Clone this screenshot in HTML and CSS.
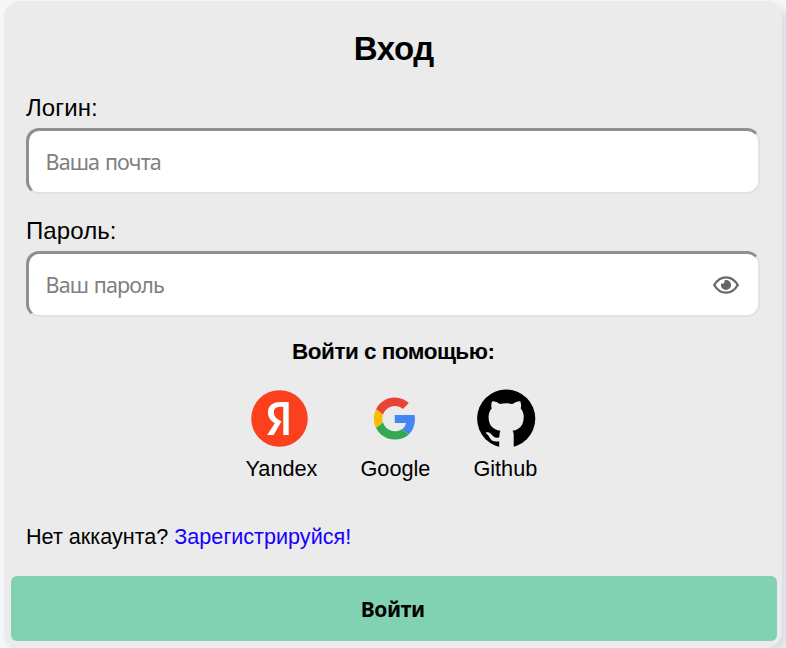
FILE: index.html
```
<!DOCTYPE html>
<html lang="ru">
<head>
<meta charset="utf-8">
<title>Вход</title>
<link rel="stylesheet" href="styles.css">
</head>
<body>
<form class="card">
  <h1 class="title">Вход</h1>
  <div class="field">
    <label class="label" for="login">Логин:</label>
    <div class="control"><input class="input" id="login" type="text" placeholder="Ваша почта"></div>
  </div>
  <div class="field">
    <label class="label" for="password">Пароль:</label>
    <div class="control">
      <input class="input input-password" id="password" type="password" placeholder="Ваш пароль">
      <svg class="eye" viewBox="0 0 26 18" width="26" height="18">
        <path d="M1.2 9C4.2 4 8.3 1.3 13 1.3S21.800 4 24.800 9C21.800 14 17.700 16.700 13 16.700S4.200 14 1.200 9Z" fill="none" stroke="#666" stroke-width="2.300"/>
        <path d="M13 3.900A5.100 5.100 0 1 1 7.900 9L8.100 7.600C10.200 8.300 12.200 7 11.600 4.100Z" fill="#666"/>
      </svg>
    </div>
  </div>
  <h2 class="subtitle">Войти с помощью:</h2>
  <div class="providers">
    <a class="provider yandex">
      <svg class="logo" viewBox="0 0 60 60">
        <circle cx="29.500" cy="29.500" r="28.300" fill="#fc3f1d"/>
        <path fill="#fff" d="M38.700 45.900H33.300V17.700H30.500C26.100 17.700 23.800 19.900 23.800 23.200C23.800 26.900 25.400 28.600 28.700 30.800L31.400 32.600L23.600 45.900H17.200L24.800 34.200C20.400 31.100 17.900 28 17.900 23.400C17.900 17.400 22.100 13 30.300 13H38.700Z"/>
      </svg>
      <span>Yandex</span>
    </a>
    <a class="provider google">
      <svg class="logo" viewBox="0 0 60 60">
        <g transform="translate(8.800 8.600) scale(.875)">
          <path fill="#EA4335" d="M24 9.500c3.540 0 6.710 1.220 9.210 3.600l6.850-6.850C35.900 2.380 30.470 0 24 0 14.620 0 6.510 5.380 2.560 13.220l7.980 6.190C12.430 13.720 17.740 9.500 24 9.500z"/>
          <path fill="#4285F4" d="M46.980 24.550c0-1.570-.15-3.090-.38-4.550H24v9.020h12.940c-.58 2.960-2.260 5.480-4.780 7.180l7.730 6c4.510-4.180 7.090-10.360 7.090-17.650z"/>
          <path fill="#FBBC05" d="M10.530 28.590c-.48-1.450-.76-2.990-.76-4.590s.27-3.140.76-4.590l-7.980-6.190C.92 16.460 0 20.120 0 24c0 3.880.92 7.540 2.560 10.780l7.970-6.190z"/>
          <path fill="#34A853" d="M24 48c6.480 0 11.930-2.130 15.890-5.810l-7.730-6c-2.150 1.450-4.920 2.300-8.160 2.300-6.260 0-11.570-4.220-13.470-9.910l-7.980 6.190C6.510 42.620 14.620 48 24 48z"/>
        </g>
      </svg>
      <span>Google</span>
    </a>
    <a class="provider github">
      <svg class="logo" viewBox="0 0 60 60">
        <circle cx="30.200" cy="29.600" r="29.100"/>
        <path transform="translate(-.500 0)" fill="#ebebeb" d="M16.600 12.300C19.500 12.200 22.300 13.500 24.500 15.100C28.300 14.100 33 14.100 36.900 15.100C39.200 13.500 42 12.200 44.800 12.300C45.800 14.800 45.900 17.400 45.200 19.600C47.300 22 48.300 24.900 48.200 28.200C48 36 44.500 40.600 37 41.700C38.100 43.300 38.200 44.500 38.200 46.500V60H23.700V52.300C18.500 53.300 15.400 51.600 13.900 48.200C13 46.400 12 45.400 10.700 44.500C9.400 43.500 11.500 42.900 13.300 43.600C16.900 45 17 48.700 21.300 48.700C22.600 48.700 23.600 48.300 23.900 47.700C23.900 45 24.200 43.300 25 41.700C17 40.600 13.200 36 13.100 28.200C13 24.900 14 22 16.200 19.600C15.500 17.400 15.600 14.800 16.600 12.300Z"/>
      </svg>
      <span>Github</span>
    </a>
  </div>
  <p class="signup">Нет аккаунта? <a class="link" href="#">Зарегистрируйся!</a></p>
  <button class="submit" type="button">Войти</button>
</form>
</body>
</html>
```
FILE: styles.css
```
* { box-sizing: border-box; }
html, body { margin: 0; height: 100%; overflow: hidden; }
body {
  padding: 1px 4px 0;
  background: #f6f7f9;
  font-family: "Liberation Sans", Arial, sans-serif;
  color: #000;
}
.card {
  display: flex;
  flex-direction: column;
  width: 778px;
  height: 647px;
  padding: 0 5.500px 0 7px;
  border-radius: 16px;
  background: #ebebeb;
  box-shadow: 5px 5px 10px #d3dbe2;
}
.title {
  margin: 28px 0 0;
  font-size: 33px;
  line-height: 40px;
  letter-spacing: -.4px;
  text-align: center;
}
.field { margin: 22px 17px 0 15px; }
.title + .field { margin-top: 25px; }
.label {
  display: block;
  font-size: 24px;
  line-height: 28px;
  height: 34px;
  letter-spacing: .1px;
}
.control { position: relative; height: 67px; }
.input {
  display: block;
  width: 100%;
  height: 66px;
  padding: 0 16.500px;
  border: solid;
  border-width: 3px 2px 2px 3px;
  border-color: #8f8f8f #e2e2e2 #e2e2e2 #8f8f8f;
  border-radius: 13px;
  background: #fff;
  font-family: "Noto Sans", sans-serif;
  font-size: 21.500px;
  letter-spacing: -.850px;
  word-spacing: 1px;
}
.input::placeholder { color: #808080; opacity: 1; }
.eye { position: absolute; right: 21px; top: 25px; }
.subtitle {
  margin: 20px 1px 0 0;
  font-size: 22.500px;
  line-height: 28px;
  letter-spacing: -.5px;
  text-align: center;
}
.providers {
  display: flex;
  gap: 43px;
  margin: 23px 0 0 234.500px;
}
.provider {
  display: flex;
  flex-direction: column;
  align-items: center;
  font-size: 21.700px;
  line-height: 28px;
}
.logo { width: 60px; height: 60px; margin-bottom: 6px; }
.yandex .logo { margin-right: 3px; }
.github .logo { margin-left: 2px; }
.signup {
  margin: 40px 0 0 15px;
  font-size: 21.600px;
  line-height: 28px;
}
.link { color: #1400ff; text-decoration: none; }
.submit {
  height: 65px;
  margin-top: 25px;
  padding: 0 2px 0 0;
  border: 0;
  border-radius: 6px;
  background: #81d2b3;
  color: #000;
  font: bold 21px "Noto Sans", sans-serif;
  letter-spacing: -.4px;
}
```
